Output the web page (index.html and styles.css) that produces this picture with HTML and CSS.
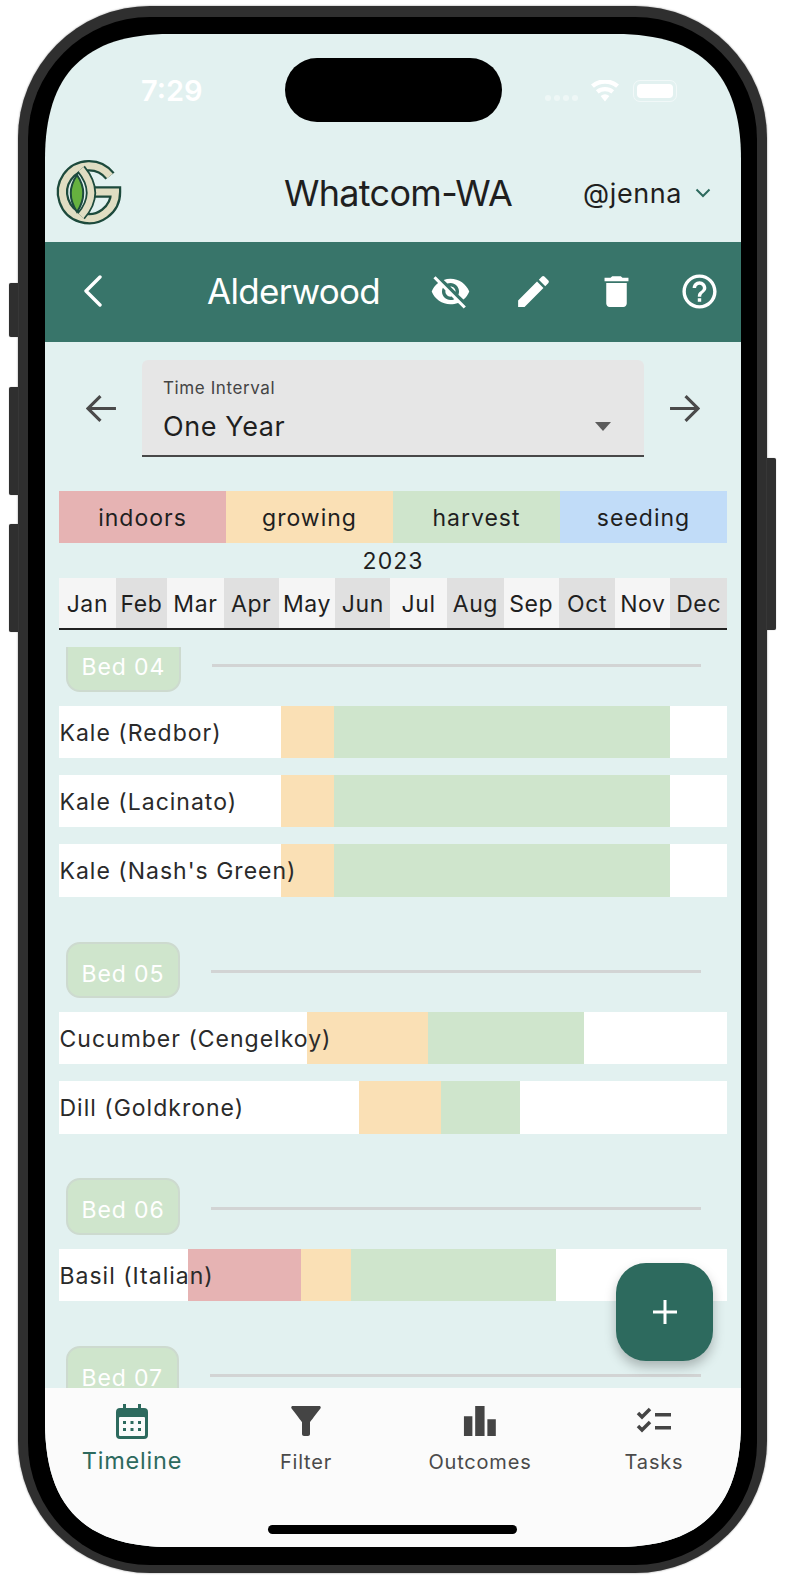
FILE: index.html
```html
<!DOCTYPE html>
<html lang="en">
<head>
    <meta charset="UTF-8">
    <meta name="viewport" content="width=device-width, initial-scale=1.0">
    <title>Whatcom-WA</title>
    <link rel="stylesheet" href="styles.css">
</head>
<body>
    <div class="phone">
        <span class="side-btn side-mute"></span>
        <span class="side-btn side-up"></span>
        <span class="side-btn side-down"></span>
        <span class="side-btn side-power"></span>
        <div class="bezel">
            <div class="screen">
                <div class="notch"></div>
                <div class="status">
                    <span class="time">7:29</span>
                    <div class="status-icons">
                        <span class="signal"><i></i><i></i><i></i><i></i></span>
                        <svg class="wifi" viewBox="0 0 30 22"><path d="M15 21.5 10.6 16a7 7 0 0 1 8.8 0zM8.6 13.6 5.9 10.3a14.4 14.4 0 0 1 18.2 0l-2.7 3.3a10.2 10.2 0 0 0-12.8 0zM3.9 7.8 1 4.4a21.8 21.8 0 0 1 28 0l-2.9 3.4a17.4 17.4 0 0 0-22.2 0z" fill="#fff"/></svg>
                        <span class="battery"><span class="battery-fill"></span></span>
                    </div>
                </div>
                <header class="topbar">
                    <svg class="logo" viewBox="50 150 80 80">
                        <path d="M110 176A26.500 26.500 0 1 0 115.500 192H95" fill="none" stroke="#1d4a3c" stroke-width="11.500"/>
                        <path d="M110 176A26.500 26.500 0 1 0 115.500 192H95" fill="none" stroke="#e0ddc2" stroke-width="7"/>
                        <path d="M77 175Q64.500 193 77 212Q89.500 193 77 175Z" fill="#66b13f" stroke="#1d4a3c" stroke-width="2"/>
                        <path d="M81 169Q101 193 81 216" fill="none" stroke="#1d4a3c" stroke-width="10"/>
                        <path d="M81 169Q101 193 81 216" fill="none" stroke="#e0ddc2" stroke-width="6.500"/>
                    </svg>
                    <h1 class="region">Whatcom-WA</h1>
                    <div class="user">
                        <span>@jenna</span>
                        <svg class="user-caret" viewBox="0 0 16 10"><path d="M1.500 1.500 8 8l6.500-6.500" fill="none" stroke="#2d6a5e" stroke-width="2"/></svg>
                    </div>
                </header>
                <div class="appbar">
                    <svg class="back" viewBox="0 0 20 32"><path d="M17 2 3 16l14 14" fill="none" stroke="#fff" stroke-width="3.400" stroke-linecap="round" stroke-linejoin="round"/></svg>
                    <h2 class="garden">Alderwood</h2>
                    <div class="actions">
                        <svg viewBox="0 0 24 24"><path d="M12 7c2.76 0 5 2.24 5 5 0 .65-.13 1.26-.36 1.83l2.92 2.92c1.51-1.26 2.7-2.89 3.43-4.75-1.73-4.39-6-7.5-11-7.5-1.4 0-2.74.25-3.98.7l2.16 2.16C10.74 7.13 11.35 7 12 7zM2 4.27l2.28 2.28.46.46C3.08 8.3 1.78 10.02 1 12c1.73 4.39 6 7.5 11 7.5 1.55 0 3.03-.3 4.38-.84l.42.42L19.73 22 21 20.73 3.27 3 2 4.27zM7.53 9.8l1.55 1.55c-.05.21-.08.43-.08.65 0 1.66 1.34 3 3 3 .22 0 .44-.03.65-.08l1.55 1.55c-.67.33-1.41.53-2.2.53-2.76 0-5-2.24-5-5 0-.79.2-1.53.53-2.2zm4.31-.78l3.15 3.15.02-.16c0-1.66-1.34-3-3-3l-.17.01z"/></svg>
                        <svg viewBox="0 0 24 24"><path d="M3 17.25V21h3.75L17.81 9.94l-3.75-3.75L3 17.25zM20.71 7.04c.39-.39.39-1.02 0-1.41l-2.34-2.34c-.39-.39-1.02-.39-1.41 0l-1.83 1.83 3.75 3.75 1.83-1.83z"/></svg>
                        <svg viewBox="0 0 24 24"><path d="M6 19c0 1.1.9 2 2 2h8c1.1 0 2-.9 2-2V7H6v12zM19 4h-3.5l-1-1h-5l-1 1H5v2h14V4z"/></svg>
                        <svg viewBox="0 0 24 24"><path d="M11 18h2v-2h-2v2zm1-16C6.48 2 2 6.48 2 12s4.48 10 10 10 10-4.48 10-10S17.52 2 12 2zm0 18c-4.41 0-8-3.59-8-8s3.59-8 8-8 8 3.59 8 8-3.59 8-8 8zm0-14c-2.21 0-4 1.79-4 4h2c0-1.1.9-2 2-2s2 .9 2 2c0 2-3 1.75-3 5h2c0-2.25 3-2.5 3-5 0-2.21-1.79-4-4-4z"/></svg>
                    </div>
                </div>
                <div class="interval">
                    <svg class="arrow" viewBox="0 0 30 28"><path d="M29 14H2M14 2 2 14l12 12" fill="none" stroke="#4a4a4a" stroke-width="3"/></svg>
                    <div class="select">
                        <span class="select-label">Time Interval</span>
                        <span class="select-value">One Year</span>
                        <span class="select-caret"></span>
                    </div>
                    <svg class="arrow" viewBox="0 0 30 28"><path d="M1 14h27M16 2l12 12-12 12" fill="none" stroke="#4a4a4a" stroke-width="3"/></svg>
                </div>
                <div class="legend">
                    <span class="indoors">indoors</span>
                    <span class="growing">growing</span>
                    <span class="harvest">harvest</span>
                    <span class="seeding">seeding</span>
                </div>
                <div class="year">2023</div>
                <div class="months">
                    <span style="flex-grow:31">Jan</span>
                    <span style="flex-grow:28">Feb</span>
                    <span style="flex-grow:31">Mar</span>
                    <span style="flex-grow:30">Apr</span>
                    <span style="flex-grow:31">May</span>
                    <span style="flex-grow:30">Jun</span>
                    <span style="flex-grow:31">Jul</span>
                    <span style="flex-grow:31">Aug</span>
                    <span style="flex-grow:30">Sep</span>
                    <span style="flex-grow:31">Oct</span>
                    <span style="flex-grow:30">Nov</span>
                    <span style="flex-grow:31">Dec</span>
                </div>
                <div class="timeline">
                    <section class="bed bed-first">
                        <div class="bed-head"><span class="chip">Bed 04</span><span class="bed-line"></span></div>
                        <div class="plant"><span class="plant-name">Kale (Redbor)</span><div class="segs"><i style="width:222px"></i><b class="growing" style="width:53px"></b><b class="harvest" style="width:336px"></b></div></div>
                        <div class="plant"><span class="plant-name">Kale (Lacinato)</span><div class="segs"><i style="width:222px"></i><b class="growing" style="width:53px"></b><b class="harvest" style="width:336px"></b></div></div>
                        <div class="plant"><span class="plant-name">Kale (Nash's Green)</span><div class="segs"><i style="width:222px"></i><b class="growing" style="width:53px"></b><b class="harvest" style="width:336px"></b></div></div>
                    </section>
                    <section class="bed">
                        <div class="bed-head"><span class="chip">Bed 05</span><span class="bed-line"></span></div>
                        <div class="plant"><span class="plant-name">Cucumber (Cengelkoy)</span><div class="segs"><i style="width:247.7px"></i><b class="growing" style="width:121px"></b><b class="harvest" style="width:156px"></b></div></div>
                        <div class="plant"><span class="plant-name">Dill (Goldkrone)</span><div class="segs"><i style="width:299.8px"></i><b class="growing" style="width:82px"></b><b class="harvest" style="width:79px"></b></div></div>
                    </section>
                    <section class="bed">
                        <div class="bed-head"><span class="chip">Bed 06</span><span class="bed-line"></span></div>
                        <div class="plant"><span class="plant-name">Basil (Italian)</span><div class="segs"><i style="width:128.5px"></i><b class="indoors" style="width:113.7px"></b><b class="growing" style="width:49.7px"></b><b class="harvest" style="width:205px"></b></div></div>
                    </section>
                    <section class="bed">
                        <div class="bed-head"><span class="chip">Bed 07</span><span class="bed-line"></span></div>
                    </section>
                </div>
                <button class="fab"><svg viewBox="0 0 24 24"><path d="M12 0v24M0 12h24" fill="none" stroke="#fff" stroke-width="3"/></svg></button>
                <nav class="tabs">
                    <div class="tab tab-active">
                        <svg class="tab-icon cal" viewBox="0 0 32 35"><path d="M7 0h3v4h12V0h3v4h3a4 4 0 0 1 4 4v23a4 4 0 0 1-4 4H4a4 4 0 0 1-4-4V8a4 4 0 0 1 4-4h3z" fill="#2d6a5e"/><rect x="3" y="13" width="26" height="19" rx="1" fill="#fbfbfb"/><path d="M7 17h3v3H7zM14.500 17h3v3h-3zM22 17h3v3h-3zM7 24h3v3H7zM14.500 24h3v3h-3zM22 24h3v3h-3z" fill="#2d6a5e"/></svg>
                        <span>Timeline</span>
                    </div>
                    <div class="tab">
                        <svg class="tab-icon" viewBox="0 0 30 30"><path d="M.6 2.400C3.700 6.500 11 16 11 16v12c0 1 .9 2 2 2h4c1.100 0 2-1 2-2V16s7.300-9.500 10.400-13.600C30.200 1.300 29.500 0 28.200 0H1.800C.5 0-.2 1.300.6 2.400z" fill="#444"/></svg>
                        <span>Filter</span>
                    </div>
                    <div class="tab">
                        <svg class="tab-icon" viewBox="0 0 36 32"><path d="M1 11h9v21H1zM13 0h10v32H13zM26 14h9v18h-9z" fill="#444"/></svg>
                        <span>Outcomes</span>
                    </div>
                    <div class="tab">
                        <svg class="tab-icon" viewBox="0 0 36 30"><path d="M2 7l4 4 8-8M2 20l4 4 8-8" fill="none" stroke="#444" stroke-width="3.500"/><path d="M19 7h16v3.500H19zM19 20h16v3.500H19z" fill="#444"/></svg>
                        <span>Tasks</span>
                    </div>
                </nav>
                <div class="home-bar"></div>
            </div>
        </div>
    </div>
</body>
</html>
```

FILE: styles.css
```css
* {
    box-sizing: border-box;
}
body {
    margin: 0;
    width: 788px;
    height: 1575px;
    overflow: hidden;
    background: #fff;
    font-family: Inter, "Liberation Sans", sans-serif;
    color: #1f1f1f;
}
.phone {
    position: relative;
    width: 749px;
    height: 1567px;
    margin: 6px 0 0 18px;
    padding: 11px 10px 8px;
    background: #2f2f2f;
    border-radius: 132px;
    box-shadow: 0 0 2px #888;
}
.side-btn {
    position: absolute;
    left: -9px;
    width: 9px;
    background: #2f2f2f;
    border-radius: 2px 0 0 2px;
    box-shadow: 0 0 1px #888;
}
.side-mute {
    top: 277px;
    height: 54px;
}
.side-up {
    top: 381px;
    height: 108px;
}
.side-down {
    top: 518px;
    height: 108px;
}
.side-power {
    top: 452px;
    left: auto;
    right: -9px;
    height: 172px;
    border-radius: 0 2px 2px 0;
}
.bezel {
    height: 100%;
    padding: 17px 16px 18px 17px;
    background: #000;
    border-radius: 122px;
}
.screen {
    position: relative;
    display: flex;
    flex-direction: column;
    height: 100%;
    overflow: hidden;
    background: #e2f1f0;
    clip-path: path("M0 125C0 40 40 0 125 0H571C656 0 696 40 696 125V1388C696 1473 656 1513 571 1513H125C40 1513 0 1473 0 1388Z");
}
.notch {
    position: absolute;
    top: 24px;
    left: 239.5px;
    width: 217px;
    height: 64px;
    background: #000;
    border-radius: 32px;
}
.status {
    display: flex;
    justify-content: space-between;
    align-items: flex-start;
    height: 110px;
    padding: 40px 64px 0 96px;
    color: #fff;
}
.time {
    font-size: 29px;
    font-weight: 600;
    line-height: 34px;
}
.status-icons {
    display: flex;
    align-items: flex-start;
    gap: 13px;
    margin-top: 6px;
}
.signal {
    display: flex;
    gap: 3px;
    margin: 15px -1px 0 0;
}
.signal i {
    width: 6px;
    height: 6px;
    border-radius: 50%;
    background: #eef7f6;
}
.wifi {
    width: 30px;
    height: 22px;
}
.battery {
    width: 44px;
    height: 22px;
    padding: 3px;
    border: 1px solid #f1f8f8;
    border-radius: 7px;
}
.battery-fill {
    display: block;
    height: 100%;
    background: #fff;
    border-radius: 4px;
}
.topbar {
    display: flex;
    align-items: center;
    height: 98px;
}
.logo {
    width: 80px;
    height: 80px;
    margin: 0 0 6px 5px;
}
.region {
    margin: 0 0 0 154px;
    font-size: 36px;
    font-weight: 400;
    line-height: 40px;
    letter-spacing: -0.7px;
}
.user {
    display: flex;
    align-items: center;
    gap: 13px;
    margin-left: 71px;
    font-size: 27px;
    letter-spacing: 0.6px;
}
.user-caret {
    width: 16px;
    height: 10px;
}
.appbar {
    display: flex;
    align-items: center;
    height: 100px;
    padding: 0 0 2px 38px;
    background: #38756a;
    color: #fff;
}
.back {
    width: 20px;
    height: 32px;
}
.garden {
    margin: 0 0 0 104px;
    font-size: 35px;
    font-weight: 400;
    line-height: 40px;
    letter-spacing: -0.7px;
}
.actions {
    display: flex;
    gap: 42px;
    margin-left: 50px;
}
.actions svg {
    width: 41px;
    height: 41px;
    fill: #fff;
}
.interval {
    display: flex;
    align-items: center;
    justify-content: space-between;
    height: 97px;
    margin-top: 18px;
    padding: 0 41px;
}
.arrow {
    width: 31px;
    height: 29px;
}
.select {
    position: relative;
    display: flex;
    flex-direction: column;
    width: 502px;
    height: 97px;
    padding: 16px 21px 0;
    background: #e6e6e6;
    border-bottom: 2px solid #484848;
    border-radius: 6px 6px 0 0;
}
.select-label {
    font-size: 17px;
    line-height: 24px;
    letter-spacing: 0.6px;
    color: #444;
}
.select-value {
    margin-top: 10px;
    font-size: 27px;
    line-height: 34px;
    letter-spacing: 0.6px;
}
.select-caret {
    position: absolute;
    top: 62px;
    right: 33px;
    width: 0;
    height: 0;
    border: 8.5px solid transparent;
    border-top: 9px solid #5c5c5c;
    border-bottom: 0;
}
.legend {
    display: flex;
    height: 52px;
    margin: 34px 14px 0;
    font-size: 23px;
    letter-spacing: 1px;
}
.legend span {
    flex: 1;
    line-height: 54px;
    text-align: center;
}
.indoors {
    background: #e6b3b3;
}
.growing {
    background: #fae0b5;
}
.harvest {
    background: #cfe5cc;
}
.seeding {
    background: #c1dcf8;
}
.year {
    height: 35px;
    font-size: 23px;
    line-height: 37px;
    letter-spacing: 1px;
    text-align: center;
}
.months {
    display: flex;
    height: 52px;
    margin: 0 14px;
    border-bottom: 2px solid #222;
    font-size: 23px;
    letter-spacing: 0.6px;
}
.months span {
    flex: 1 1 0;
    line-height: 52px;
    text-align: center;
    background: #f5f5f5;
}
.months span:nth-child(even) {
    background: #e0e0e0;
}
.timeline {
    flex: 1;
    min-height: 0;
    margin-top: 17px;
    overflow: hidden;
}
.bed {
    display: flex;
    flex-direction: column;
    gap: 17px;
    margin-top: 44.8px;
}
.bed-first {
    margin-top: -11.7px;
}
.bed-head {
    display: flex;
    align-items: center;
    height: 56.5px;
    margin-bottom: -3px;
    padding: 0 40px 0 21px;
}
.chip {
    height: 56.5px;
    padding: 0 13.5px;
    font-size: 23px;
    line-height: 60px;
    letter-spacing: 0.9px;
    color: #fff;
    background: #cfe5cc;
    border: 2px solid #cddacf;
    border-radius: 14px;
}
.bed-line {
    flex: 1;
    height: 3px;
    margin: 3px 0 0 31px;
    background: #d2d4d4;
}
.plant {
    position: relative;
    height: 52.3px;
    margin: 0 14px;
    background: #fff;
}
.plant-name {
    position: absolute;
    top: 0;
    left: 0.5px;
    z-index: 1;
    font-size: 23px;
    line-height: 54px;
    letter-spacing: 1px;
    white-space: nowrap;
    color: #2a2a2a;
}
.segs {
    display: flex;
    height: 100%;
}
.segs i,
.segs b {
    display: block;
}
.fab {
    position: absolute;
    top: 1229px;
    right: 28px;
    display: flex;
    align-items: center;
    justify-content: center;
    width: 97px;
    height: 98px;
    padding: 0;
    background: #2d6a5e;
    border: 0;
    border-radius: 30px;
    box-shadow: 0 6px 12px rgba(0, 0, 0, 0.25);
}
.fab svg {
    width: 24px;
    height: 24px;
}
.tabs {
    position: relative;
    display: flex;
    flex: none;
    height: 159px;
    background: #fbfbfb;
    font-size: 20px;
    letter-spacing: 0.8px;
    color: #4a4a4a;
}
.tab {
    display: flex;
    flex: 1;
    flex-direction: column;
    align-items: center;
    padding-top: 18px;
}
.tab span {
    margin-top: 13px;
    line-height: 26px;
}
.tab-icon {
    height: 30px;
}
.tab-active {
    padding-top: 16px;
    font-size: 23.5px;
    color: #2d6a5e;
}
.tab-active span {
    margin-top: 7px;
    line-height: 30px;
}
.cal {
    width: 32px;
    height: 35px;
}
.home-bar {
    position: absolute;
    bottom: 13px;
    left: 223px;
    width: 249px;
    height: 9px;
    background: #000;
    border-radius: 5px;
}
```
